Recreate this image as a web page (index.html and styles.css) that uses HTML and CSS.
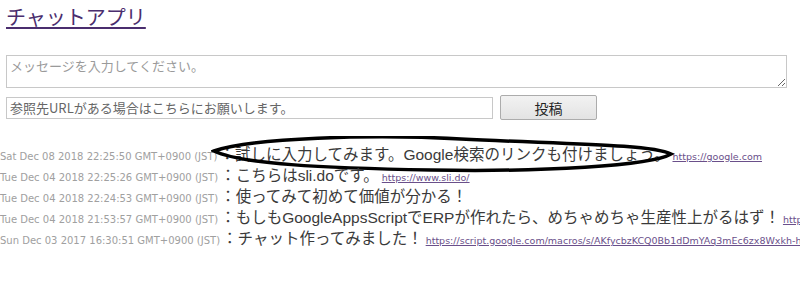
FILE: index.html
```html
<!DOCTYPE html>
<html lang="ja">
<head>
<meta charset="utf-8">
<title>チャットアプリ</title>
<link rel="stylesheet" href="styles.css">
</head>
<body>
<div class="page">
  <h1 class="title"><a href="#">チャットアプリ</a></h1>
  <form class="form">
    <textarea class="message-box" placeholder="メッセージを入力してください。"></textarea>
    <div class="url-row">
      <input class="url-box" type="text" placeholder="参照先URLがある場合はこちらにお願いします。">
      <button class="post-btn" type="button">投稿</button>
    </div>
  </form>
</div>
<div class="messages">
  <div class="msg">
    <span class="date">Sat Dec 08 2018 22:25:50 GMT+0900 (JST)</span><span class="text">：試しに入力してみます。Google検索のリンクも付けましょう。</span><a class="link" href="#">https://google.com</a>
    <svg class="circle" width="470" height="40" viewBox="0 0 470 40"><path d="M3 15 C 40 2, 160 -2, 250 3 C 350 8, 440 8, 460 18 C 440 30, 330 36, 220 34 C 110 32, 30 28, 3 15 Z" fill="none" stroke="#000" stroke-width="3.5"/></svg>
  </div>
  <div class="msg">
    <span class="date">Tue Dec 04 2018 22:25:26 GMT+0900 (JST)</span><span class="text">：こちらはsli.doです。</span><a class="link" href="#">https://www.sli.do/</a>
  </div>
  <div class="msg">
    <span class="date">Tue Dec 04 2018 22:24:53 GMT+0900 (JST)</span><span class="text">：使ってみて初めて価値が分かる！</span>
  </div>
  <div class="msg">
    <span class="date">Tue Dec 04 2018 21:53:57 GMT+0900 (JST)</span><span class="text">：もしもGoogleAppsScriptでERPが作れたら、めちゃめちゃ生産性上がるはず！</span><a class="link" href="#">https://www.google.com/</a>
  </div>
  <div class="msg">
    <span class="date">Sun Dec 03 2017 16:30:51 GMT+0900 (JST)</span><span class="text">：チャット作ってみました！</span><a class="link" href="#">https://script.google.com/macros/s/AKfycbzKCQ0Bb1dDmYAq3mEc6zx8Wxkh-hUp0bEDYmBn/exec</a>
  </div>
</div>
</body>
</html>
```
FILE: styles.css
```css
html, body {
  margin: 0;
  padding: 0;
  background: #fff;
  overflow: hidden;
}
body {
  font-family: "Noto Sans CJK JP", "Noto Sans", sans-serif;
  width: 800px;
  height: 304px;
}
.page {
  padding: 4px 0 0 6px;
}
.title {
  margin: 0;
  font-size: 20px;
  line-height: 26px;
  font-weight: normal;
}
.title a {
  color: #4a2d6e;
  text-decoration: underline;
  text-underline-offset: 2px;
}
.form {
  margin-top: 25px;
}
.message-box {
  display: block;
  box-sizing: border-box;
  width: 781px;
  height: 33px;
  margin: 0;
  padding: 2px 3px;
  border: 1px solid #c8c8c8;
  font-family: "Noto Sans CJK JP", sans-serif;
  font-size: 13px;
  line-height: 16px;
  resize: vertical;
  outline: none;
}
.message-box::placeholder {
  color: #9a9a9a;
}
.url-row {
  display: flex;
  align-items: center;
  gap: 7px;
  margin-top: 7px;
  height: 25px;
}
.url-box {
  box-sizing: border-box;
  width: 487px;
  height: 22px;
  margin: 0;
  padding: 0 3px;
  border: 1px solid #c8c8c8;
  font-family: "Noto Sans CJK JP", sans-serif;
  font-size: 13px;
  outline: none;
}
.url-box::placeholder {
  color: #666;
}
.post-btn {
  box-sizing: border-box;
  width: 97px;
  height: 25px;
  margin: 0;
  padding: 0;
  border: 1px solid #acacac;
  border-radius: 2px;
  background: linear-gradient(#f2f2f2, #e3e3e3);
  font-family: "Noto Sans CJK JP", sans-serif;
  font-size: 14px;
  color: #222;
}
.messages {
  margin-top: 23px;
  padding-left: 0;
}
.msg {
  position: relative;
  height: 21px;
  line-height: 21px;
  white-space: nowrap;
}
.date {
  font-family: "DejaVu Sans", Verdana, sans-serif;
  font-size: 10px;
  color: #a0a0a0;
}
.text {
  font-family: "Liberation Sans", "Noto Sans CJK JP", sans-serif;
  font-size: 15.5px;
  color: #3a3a3a;
  margin-left: 2px;
}
.link {
  font-family: "DejaVu Sans", Verdana, sans-serif;
  font-size: 9.5px;
  color: #6a4f8a;
  margin-left: 3px;
}
.circle {
  position: absolute;
  left: 211px;
  top: -7px;
  pointer-events: none;
}
```
